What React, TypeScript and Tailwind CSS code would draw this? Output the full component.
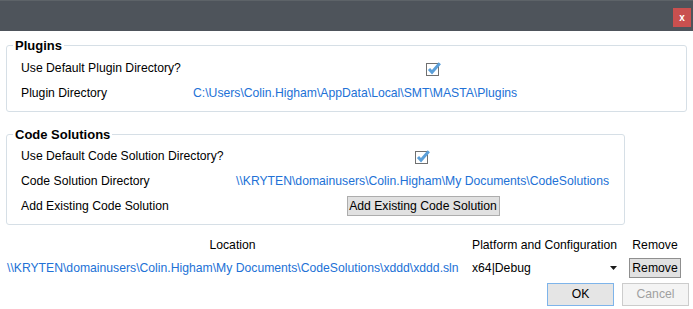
import { FC } from "react";

// Ticked checkbox as drawn by WinForms: grey box, blue tick overflowing top-right
const CheckMark: FC = () => (
  <svg width="16" height="15" viewBox="0 0 16 15">
    <rect x="0.5" y="2.5" width="12" height="12" fill="#ffffff" stroke="#707070" />
    <path d="M3 8 L6 11.2 L13.8 2.2" fill="none" stroke="#5b9fd9" strokeWidth="3" strokeLinejoin="miter" />
  </svg>
);

const DropArrow: FC = () => (
  <svg width="7" height="4" viewBox="0 0 7 4">
    <path d="M0 0 H7 L3.5 4 Z" fill="#1a1a1a" />
  </svg>
);

const App: FC = () => {
  return (
    <div className="w-[693px] h-[309px] overflow-hidden bg-white text-[12.2px] leading-none text-black font-['Liberation_Sans',Arial,sans-serif]">
      {/* title bar */}
      <div className="h-[31px] bg-[#4e545b] border-t border-[#5d6368] flex justify-end items-start pr-[2px]">
        <button className="mt-[7px] w-[18px] h-[19px] bg-[#c9504f] text-white text-[10px] font-bold flex items-center justify-center">
          x
        </button>
      </div>

      {/* Plugins */}
      <fieldset className="mt-[7px] ml-[6px] w-[681px] border border-[#d6dfe6] rounded-[3px] p-0 pt-[3px] pb-[5px]">
        <legend className="ml-[6px] px-[2px] text-[13px] leading-[15px] font-bold">Plugins</legend>
        <div className="flex items-center h-[25px] pl-[14px]">
          <div className="w-[172px] whitespace-nowrap">Use Default Plugin Directory?</div>
          <div className="w-[482px] flex justify-center">
            <CheckMark />
          </div>
        </div>
        <div className="flex items-center h-[25px] pl-[14px]">
          <div className="w-[172px] whitespace-nowrap">Plugin Directory</div>
          <div className="text-[#2271d6] whitespace-nowrap">C:\Users\Colin.Higham\AppData\Local\SMT\MASTA\Plugins</div>
        </div>
      </fieldset>

      {/* Code Solutions */}
      <fieldset className="mt-[15px] ml-[6px] w-[619px] border border-[#d6dfe6] rounded-[3px] p-0 pt-[2px] pb-[6px]">
        <legend className="ml-[6px] px-[2px] text-[13px] leading-[15px] font-bold">Code Solutions</legend>
        <div className="flex items-center h-[25px] pl-[14px]">
          <div className="w-[215px] whitespace-nowrap">Use Default Code Solution Directory?</div>
          <div className="w-[374px] flex justify-center">
            <CheckMark />
          </div>
        </div>
        <div className="flex items-center h-[25px] pl-[14px]">
          <div className="w-[215px] whitespace-nowrap">Code Solution Directory</div>
          <div className="text-[#2271d6] whitespace-nowrap">\\KRYTEN\domainusers\Colin.Higham\My Documents\CodeSolutions</div>
        </div>
        <div className="flex items-center h-[24px] pl-[14px]">
          <div className="w-[215px] whitespace-nowrap">Add Existing Code Solution</div>
          <div className="w-[374px] flex justify-center">
            <button className="w-[153px] h-[20px] bg-[#e1e1e1] border border-[#adadad] whitespace-nowrap">
              Add Existing Code Solution
            </button>
          </div>
        </div>
      </fieldset>

      {/* solutions table */}
      <div className="mt-[11px] grid grid-cols-[465px_163px_54px]">
        <div className="h-[18px] flex items-center justify-center">Location</div>
        <div className="h-[18px] flex items-center pl-[7px] whitespace-nowrap">Platform and Configuration</div>
        <div className="h-[18px] flex items-center justify-center">Remove</div>

        <div className="h-[22px] mt-[3px] flex items-center pl-[7px] text-[#2271d6] whitespace-nowrap">
          \\KRYTEN\domainusers\Colin.Higham\My Documents\CodeSolutions\xddd\xddd.sln
        </div>
        <div className="h-[22px] mt-[3px] flex items-center justify-between pl-[7px] pr-[11px]">
          <span>x64|Debug</span>
          <DropArrow />
        </div>
        <div className="h-[22px] mt-[3px] flex items-center justify-center">
          <button className="w-[52px] h-[20px] bg-[#e1e1e1] border border-[#8f8f8f]">Remove</button>
        </div>
      </div>

      <div className="mt-[4px] flex justify-end gap-[8px] pr-[4px]">
        <button className="w-[67px] h-[23px] bg-[#e5e5e5] border border-[#7eb4ea]">OK</button>
        <button className="w-[67px] h-[23px] bg-[#f4f4f4] border border-[#cccccc] text-[#a0a0a0]">Cancel</button>
      </div>
    </div>
  );
};

export default App;
